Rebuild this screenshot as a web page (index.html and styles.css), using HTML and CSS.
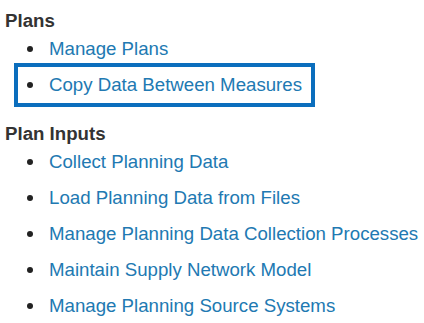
FILE: index.html
```html
<!DOCTYPE html>
<html>
<head>
<meta charset="utf-8">
<title>Plans</title>
<link rel="stylesheet" href="styles.css">
</head>
<body>
<div class="topics">
	<h3>Plans</h3>
	<ul>
		<li><a>Manage Plans</a></li>
		<li class="current"><a>Copy Data Between Measures</a></li>
	</ul>
	<h3>Plan Inputs</h3>
	<ul>
		<li><a>Collect Planning Data</a></li>
		<li><a>Load Planning Data from Files</a></li>
		<li><a>Manage Planning Data Collection Processes</a></li>
		<li><a>Maintain Supply Network Model</a></li>
		<li><a>Manage Planning Source Systems</a></li>
	</ul>
</div>
</body>
</html>
```

FILE: styles.css
```css
body{
	margin:0;
	background-color:white;
	font-family:"Liberation Sans", Arial, sans-serif;
	font-size:18.66px;
}
.topics{
	padding:11px 5px 0 5px;
}
.topics h3{
	margin:0;
	font-size:18.66px;
	font-weight:bold;
	line-height:20px;
	color:#333;
}
.topics ul+h3{
	margin-top:21px;
}
.topics ul{
	list-style:none;
	margin:0;
	padding:0 0 0 13px;
}
.topics li{
	display:flex;
	align-items:center;
	height:36px;
	line-height:36px;
	padding-left:9px;
	width:fit-content;
}
.topics li::before{
	content:"";
	width:6px;
	height:6px;
	border-radius:3px;
	background-color:#222;
	margin-right:16px;
}
.topics li>a{
	color:#2179b2;
	white-space:nowrap;
}
.topics li.current{
	outline:4px solid #0b6ebd;
	padding-right:9px;
}
```
